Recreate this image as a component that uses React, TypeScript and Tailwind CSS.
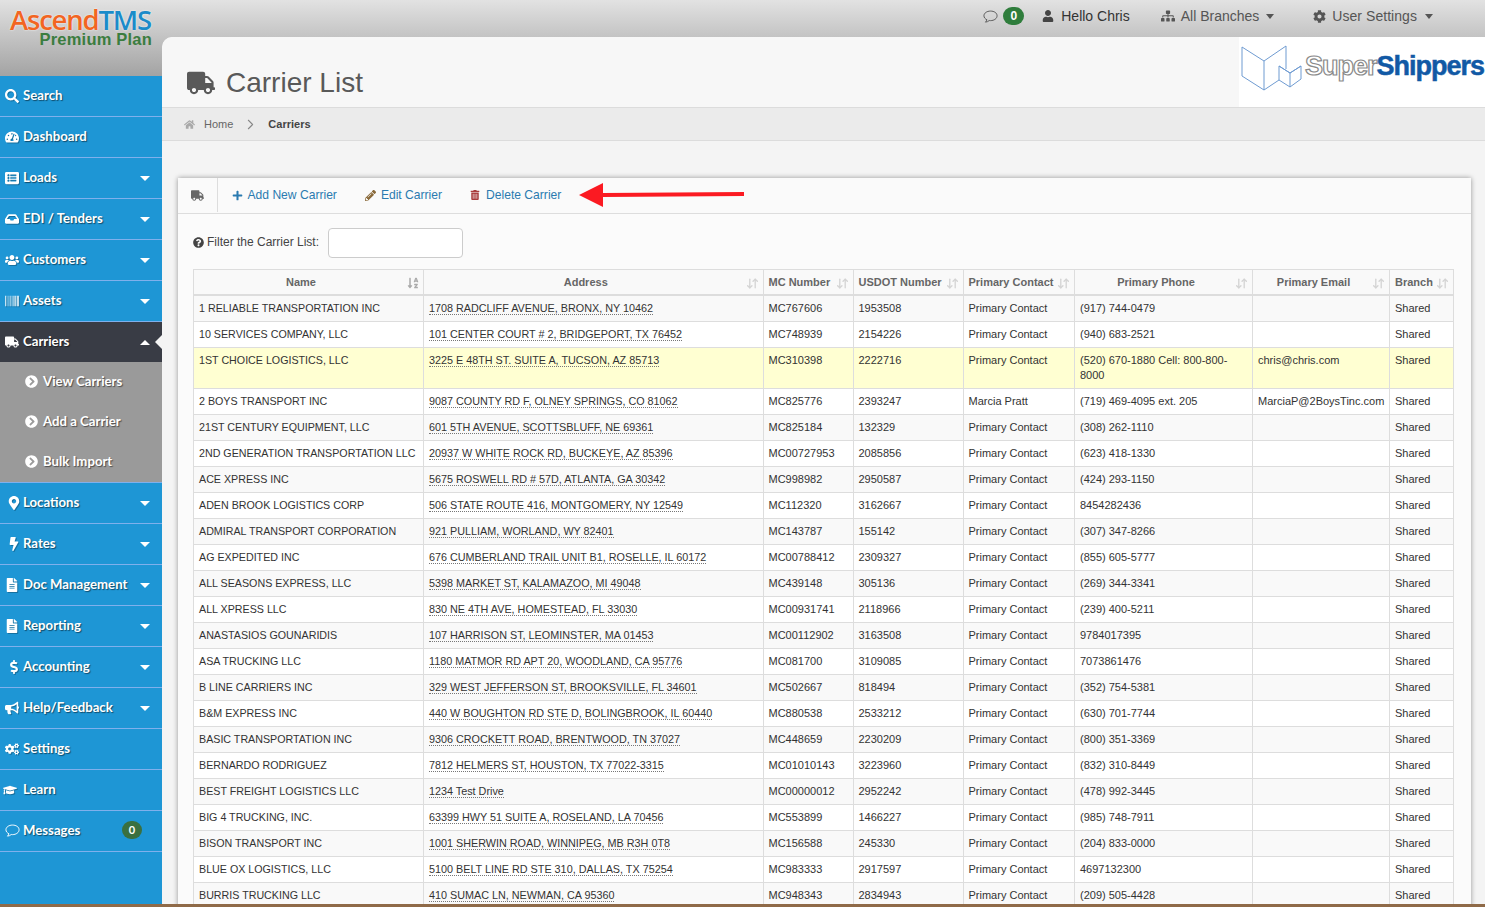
import React from "react";
import { FaSearch, FaTachometerAlt, FaListAlt, FaInbox, FaUsers, FaBarcode, FaTruck, FaChevronCircleRight, FaMapMarkerAlt, FaBolt, FaFileAlt, FaDollarSign, FaBullhorn, FaCogs, FaGraduationCap, FaUser, FaSitemap, FaCog, FaHome, FaPlus, FaPencilAlt, FaTrashAlt, FaQuestionCircle, FaSortAlphaDown } from "react-icons/fa";
import { LuChevronRight, LuArrowDownUp } from "react-icons/lu";

const sans = "font-['Liberation_Sans',Arial,sans-serif]";

function Bubble({ className }: { className?: string }) {
  return (
    <svg viewBox="0 0 16 16" width="1em" height="1em" fill="none" stroke="currentColor" strokeWidth="1" className={className}>
      <path d="M8 2.2C4.1 2.2 1 4.4 1 7.2c0 1.9 1.3 3.4 3.2 4.3-.2 1-.8 1.8-1.6 2.5 1.6-.1 3-.7 4-1.7.5.1.9.1 1.4.1 3.9 0 7-2.2 7-5.2S11.9 2.2 8 2.2z" />
    </svg>
  );
}

type Item = { label: string; icon: React.ReactNode; caret?: boolean };
const top: Item[] = [
  { label: "Search", icon: <FaSearch /> },
  { label: "Dashboard", icon: <FaTachometerAlt /> },
  { label: "Loads", icon: <FaListAlt />, caret: true },
  { label: "EDI / Tenders", icon: <FaInbox />, caret: true },
  { label: "Customers", icon: <FaUsers />, caret: true },
  { label: "Assets", icon: <FaBarcode />, caret: true },
];
const bottom: Item[] = [
  { label: "Locations", icon: <FaMapMarkerAlt className="ml-[2px]" />, caret: true },
  { label: "Rates", icon: <FaBolt className="ml-[2px]" />, caret: true },
  { label: "Doc Management", icon: <FaFileAlt />, caret: true },
  { label: "Reporting", icon: <FaFileAlt />, caret: true },
  { label: "Accounting", icon: <FaDollarSign className="ml-[2px]" />, caret: true },
  { label: "Help/Feedback", icon: <FaBullhorn />, caret: true },
  { label: "Settings", icon: <FaCogs /> },
  { label: "Learn", icon: <FaGraduationCap className="-ml-[2px]" /> },
];

const label = "text-[13.2px] font-bold [text-shadow:1px_1px_1px_rgba(0,0,0,0.5)]";

function NavRow({ item }: { item: Item }) {
  return (
    <div className="h-[41px] shrink-0 border-b border-[#7fb0ec] flex items-center pl-[5px] pr-[12px] pb-[1px] text-white">
      <span className="w-[18px] flex justify-start text-[14px] [filter:drop-shadow(1px_1px_0_rgba(0,0,0,0.25))]">{item.icon}</span>
      <span className={label}>{item.label}</span>
      {item.caret && <span className="ml-auto mt-[1px] w-0 h-0 border-x-[5px] border-x-transparent border-t-[5px] border-t-white" />}
    </div>
  );
}

function Sub({ text }: { text: string }) {
  return (
    <div className="h-[40px] flex items-center pl-[25px] pb-[1px] text-white">
      <FaChevronCircleRight className="text-[13px] mr-[5px]" />
      <span className={label}>{text}</span>
    </div>
  );
}

function Sidebar() {
  return (
    <aside className="w-[162px] shrink-0 h-[904px] flex flex-col font-['Lato',sans-serif]">
      <div className="h-[76px] shrink-0 pl-[10px] pt-[8px] font-['Open_Sans',sans-serif]">
        <div className="text-[27.5px] leading-[24px] tracking-[-1.2px] font-semibold [text-shadow:0_0_2px_#fff]">
          <span className="text-[#f26522]">Ascend</span><span className="text-[#1b8bc9]">TMS</span>
        </div>
        <div className={`text-[16.5px] leading-[15px] tracking-[0.2px] font-bold text-[#3b7d3f] text-right pr-[10px] ${sans}`}>Premium Plan</div>
      </div>
      <div className="flex-1 bg-[#1e96d5] flex flex-col">
        {top.map((i) => <NavRow key={i.label} item={i} />)}
        <div className="h-[40px] shrink-0 bg-[#393c45] flex items-center pl-[5px] pr-[12px] pb-[1px] text-white relative">
          <span className="w-[18px] flex justify-start text-[14px]"><FaTruck /></span>
          <span className={label}>Carriers</span>
          <span className="ml-auto mt-[1px] w-0 h-0 border-x-[5px] border-x-transparent border-b-[5px] border-b-white" />
          <span className="absolute right-0 top-[13px] border-y-[7px] border-y-transparent border-r-[7px] border-r-[#f4f4f4]" />
        </div>
        <div className="h-[121px] shrink-0 bg-[#9a9a9a] border-b border-[#7fb0ec]">
          <Sub text="View Carriers" />
          <Sub text="Add a Carrier" />
          <Sub text="Bulk Import" />
        </div>
        {bottom.map((i) => <NavRow key={i.label} item={i} />)}
        <div className="h-[41px] shrink-0 border-b border-[#7fb0ec] flex items-center pl-[5px] pb-[1px] text-white relative">
          <span className="w-[18px] flex justify-start text-[15px]"><Bubble /></span>
          <span className={label}>Messages</span>
          <span className="absolute left-[122px] top-[10px] w-[20px] h-[18px] rounded-full bg-[#3a7040] flex items-center justify-center text-[11px] font-bold">0</span>
        </div>
      </div>
    </aside>
  );
}

function Caret() {
  return <span className="w-0 h-0 border-x-[4px] border-x-transparent border-t-[5px] border-t-[#555]" />;
}

function TopBar() {
  return (
    <header className={`h-[37px] shrink-0 flex items-center justify-end pb-[5px] text-[#444] text-[14px] ${sans}`}>
      <Bubble className="text-[15px] text-[#555] mr-[5px]" />
      <span className="w-[21px] h-[18px] rounded-full bg-[#2f7d3c] text-white text-[12px] font-bold flex items-center justify-center mr-[18px]">0</span>
      <FaUser className="text-[12px] mr-[7px]" />
      <span className="mr-[31px] text-[#333]">Hello Chris</span>
      <FaSitemap className="text-[14px] text-[#555] mr-[6px]" />
      <span className="text-[#555] mr-[7px]">All Branches</span>
      <Caret />
      <FaCog className="text-[13px] text-[#555] ml-[39px] mr-[6px]" />
      <span className="text-[#555] mr-[8px] tracking-[0.05px]">User Settings</span>
      <Caret />
      <span className="w-[52px]" />
    </header>
  );
}

function Logo() {
  return (
    <div className="w-[246px] h-[70px] bg-white flex items-start pl-[2px] pt-[8px] shrink-0 overflow-hidden">
      <svg width="62" height="48" viewBox="0 0 62 48" fill="none" stroke="#6f9bd1" strokeWidth="1" className="shrink-0">
        <path d="M1 2 L23 16 L45 1 L45 24 M1 2 L1 31 L23 45 L38 35 M23 16 L23 45 M38 21 L38 35 L49 42 L60 34 L60 21 L49 28 Z M38 21 L49 28 M49 28 L49 42 M49 28 L60 21" />
      </svg>
      <span className="ml-[2px] mt-[4px] font-['Liberation_Sans',sans-serif] font-bold text-[27px] leading-[34px] tracking-[-1px] whitespace-nowrap">
        <span className="text-white [-webkit-text-stroke:1.2px_#8a8a8a]">Super</span><span className="text-[#1159a5] [-webkit-text-stroke:0.5px_#1159a5]">Shippers</span>
      </span>
    </div>
  );
}

function TitleBar() {
  return (
    <div className="h-[71px] shrink-0 border-b border-[#dcdcdc] flex justify-between rounded-tl-[10px] bg-[#f7f7f7]">
      <div className="flex items-center pl-[25px] pt-[22px] text-[#595959]">
        <FaTruck className="text-[28px] mr-[11px]" />
        <h1 className="text-[28px] leading-[32px]">Carrier List</h1>
      </div>
      <Logo />
    </div>
  );
}

function Breadcrumb() {
  return (
    <div className="h-[33px] shrink-0 bg-[#ebebeb] border-b border-[#dcdcdc] flex items-center pl-[22px] text-[11px]">
      <FaHome className="text-[11px] text-[#a9a9a9] mr-[9px]" />
      <span className="text-[#666]">Home</span>
      <LuChevronRight className="text-[17px] text-[#888] ml-[9px] mr-[9px]" strokeWidth={1.5} />
      <span className="font-bold text-[#444]">Carriers</span>
    </div>
  );
}

const rows: [string, string, string, string, string, string, string][] = [
  ["1 RELIABLE TRANSPORTATION INC", "1708 RADCLIFF AVENUE, BRONX, NY 10462", "MC767606", "1953508", "Primary Contact", "(917) 744-0479", ""],
  ["10 SERVICES COMPANY, LLC", "101 CENTER COURT # 2, BRIDGEPORT, TX 76452", "MC748939", "2154226", "Primary Contact", "(940) 683-2521", ""],
  ["1ST CHOICE LOGISTICS, LLC", "3225 E 48TH ST. SUITE A, TUCSON, AZ 85713", "MC310398", "2222716", "Primary Contact", "(520) 670-1880 Cell: 800-800-8000", "chris@chris.com"],
  ["2 BOYS TRANSPORT INC", "9087 COUNTY RD F, OLNEY SPRINGS, CO 81062", "MC825776", "2393247", "Marcia Pratt", "(719) 469-4095 ext. 205", "MarciaP@2BoysTinc.com"],
  ["21ST CENTURY EQUIPMENT, LLC", "601 5TH AVENUE, SCOTTSBLUFF, NE 69361", "MC825184", "132329", "Primary Contact", "(308) 262-1110", ""],
  ["2ND GENERATION TRANSPORTATION LLC", "20937 W WHITE ROCK RD, BUCKEYE, AZ 85396", "MC00727953", "2085856", "Primary Contact", "(623) 418-1330", ""],
  ["ACE XPRESS INC", "5675 ROSWELL RD # 57D, ATLANTA, GA 30342", "MC998982", "2950587", "Primary Contact", "(424) 293-1150", ""],
  ["ADEN BROOK LOGISTICS CORP", "506 STATE ROUTE 416, MONTGOMERY, NY 12549", "MC112320", "3162667", "Primary Contact", "8454282436", ""],
  ["ADMIRAL TRANSPORT CORPORATION", "921 PULLIAM, WORLAND, WY 82401", "MC143787", "155142", "Primary Contact", "(307) 347-8266", ""],
  ["AG EXPEDITED INC", "676 CUMBERLAND TRAIL UNIT B1, ROSELLE, IL 60172", "MC00788412", "2309327", "Primary Contact", "(855) 605-5777", ""],
  ["ALL SEASONS EXPRESS, LLC", "5398 MARKET ST, KALAMAZOO, MI 49048", "MC439148", "305136", "Primary Contact", "(269) 344-3341", ""],
  ["ALL XPRESS LLC", "830 NE 4TH AVE, HOMESTEAD, FL 33030", "MC00931741", "2118966", "Primary Contact", "(239) 400-5211", ""],
  ["ANASTASIOS GOUNARIDIS", "107 HARRISON ST, LEOMINSTER, MA 01453", "MC00112902", "3163508", "Primary Contact", "9784017395", ""],
  ["ASA TRUCKING LLC", "1180 MATMOR RD APT 20, WOODLAND, CA 95776", "MC081700", "3109085", "Primary Contact", "7073861476", ""],
  ["B LINE CARRIERS INC", "329 WEST JEFFERSON ST, BROOKSVILLE, FL 34601", "MC502667", "818494", "Primary Contact", "(352) 754-5381", ""],
  ["B&M EXPRESS INC", "440 W BOUGHTON RD STE D, BOLINGBROOK, IL 60440", "MC880538", "2533212", "Primary Contact", "(630) 701-7744", ""],
  ["BASIC TRANSPORTATION INC", "9306 CROCKETT ROAD, BRENTWOOD, TN 37027", "MC448659", "2230209", "Primary Contact", "(800) 351-3369", ""],
  ["BERNARDO RODRIGUEZ", "7812 HELMERS ST, HOUSTON, TX 77022-3315", "MC01010143", "3223960", "Primary Contact", "(832) 310-8449", ""],
  ["BEST FREIGHT LOGISTICS LLC", "1234 Test Drive", "MC00000012", "2952242", "Primary Contact", "(478) 992-3445", ""],
  ["BIG 4 TRUCKING, INC.", "63399 HWY 51 SUITE A, ROSELAND, LA 70456", "MC553899", "1466227", "Primary Contact", "(985) 748-7911", ""],
  ["BISON TRANSPORT INC", "1001 SHERWIN ROAD, WINNIPEG, MB R3H 0T8", "MC156588", "245330", "Primary Contact", "(204) 833-0000", ""],
  ["BLUE OX LOGISTICS, LLC", "5100 BELT LINE RD STE 310, DALLAS, TX 75254", "MC983333", "2917597", "Primary Contact", "4697132300", ""],
  ["BURRIS TRUCKING LLC", "410 SUMAC LN, NEWMAN, CA 95360", "MC948343", "2834943", "Primary Contact", "(209) 505-4428", ""],
];

const headers = [
  { t: "Name", w: "w-[230px]", center: true, active: true },
  { t: "Address", w: "w-[339.5px]", center: true },
  { t: "MC Number", w: "w-[90px]" },
  { t: "USDOT Number", w: "w-[110px]" },
  { t: "Primary Contact", w: "w-[111.5px]" },
  { t: "Primary Phone", w: "w-[178px]", center: true },
  { t: "Primary Email", w: "w-[137px]", center: true },
  { t: "Branch", w: "w-[64px]" },
];

function Table() {
  const td = "border border-[#dddddd] px-[5px] pt-[5px] pb-[5px] align-top leading-[15px]";
  return (
    <table className="w-[1261px] table-fixed border-collapse text-[11px] text-[#333]">
      <colgroup>{headers.map((h) => <col key={h.t} className={h.w} />)}</colgroup>
      <thead>
        <tr className="h-[25px] bg-[#f9f9f9]">
          {headers.map((h) => (
            <th key={h.t} className={`border border-[#dddddd] border-b-2 pl-[5px] pt-[1px] text-[11px] text-[#666] font-bold relative whitespace-nowrap ${h.center ? "text-center pr-[20px]" : "text-left pr-[5px]"}`}>
              {h.t}
              <span className="absolute right-[4px] top-[7px] text-[#d4d4d4] text-[13px]">
                {h.active ? <FaSortAlphaDown className="text-[#aaa] text-[12px]" /> : <LuArrowDownUp strokeWidth={2.5} />}
              </span>
            </th>
          ))}
        </tr>
      </thead>
      <tbody>
        {rows.map((r, i) => (
          <tr key={r[0]} className={i === 2 ? "bg-[#ffffd2]" : i % 2 === 0 ? "bg-[#f9f9f9]" : "bg-white"}>
            <td className={`${td} text-[10.7px] whitespace-nowrap overflow-hidden`}>{r[0]}</td>
            <td className={`${td} text-[10.8px] whitespace-nowrap`}><span className="border-b border-dotted border-[#777]">{r[1]}</span></td>
            <td className={td}>{r[2]}</td>
            <td className={td}>{r[3]}</td>
            <td className={td}>{r[4]}</td>
            <td className={td}>{r[5]}</td>
            <td className={`${td} whitespace-nowrap`}>{r[6]}</td>
            <td className={td}>Shared</td>
          </tr>
        ))}
      </tbody>
    </table>
  );
}

function Card() {
  return (
    <section className="ml-[16px] mr-[14px] mt-[37px] bg-[#fbfbfb] shadow-[0_0_5px_rgba(0,0,0,0.4)] h-[800px]">
      <div className="h-[36px] border-b border-[#dddddd] flex items-center pb-[1px] text-[12.1px] bg-[#fafafa]">
        <div className="w-[40px] h-full border-r border-[#dddddd] flex items-center justify-center text-[#666] text-[13px]"><FaTruck /></div>
        <FaPlus className="ml-[14px] text-[11px] text-[#2a7ab0] mr-[4.5px]" />
        <span className="text-[#2a7ab0]">Add New Carrier</span>
        <FaPencilAlt className="ml-[28px] text-[11px] text-[#8a6a3a] mr-[5px]" />
        <span className="text-[#2a7ab0]">Edit Carrier</span>
        <FaTrashAlt className="ml-[28px] text-[10px] text-[#a83c3c] mr-[6px]" />
        <span className="text-[#2a7ab0]">Delete Carrier</span>
        <svg width="166" height="26" viewBox="0 0 166 26" className="ml-[18px]">
          <path d="M0 13 L24 1 L24 11 L165 10 L165 14 L24 15 L24 25 Z" fill="#fb1a22" />
        </svg>
      </div>
      <div className="pl-[15px] pt-[14px] pb-[11px] flex items-center text-[12px] text-[#444]">
        <FaQuestionCircle className="text-[11px] mr-[3px] mb-[2px]" />
        <span className="pb-[2px]">Filter the Carrier List:</span>
        <div className="ml-[9px] w-[135px] h-[30px] bg-white border border-[#cccccc] rounded-[4px]" />
      </div>
      <div className="pl-[15px]"><Table /></div>
    </section>
  );
}

export default function App() {
  return (
    <div className={`h-[907px] w-[1485px] overflow-hidden relative flex bg-[linear-gradient(#e2e2e2,#a3a3a3_76px,#a3a3a3)] ${sans}`}>
      <Sidebar />
      <div className="flex-1 flex flex-col min-w-0">
        <TopBar />
        <main className="flex-1 bg-[#f4f4f4] rounded-tl-[10px] overflow-hidden">
          <TitleBar />
          <Breadcrumb />
          <Card />
        </main>
      </div>
      <div className="absolute left-0 right-0 bottom-0 h-[3px] bg-[#8f6a48]" />
    </div>
  );
}
